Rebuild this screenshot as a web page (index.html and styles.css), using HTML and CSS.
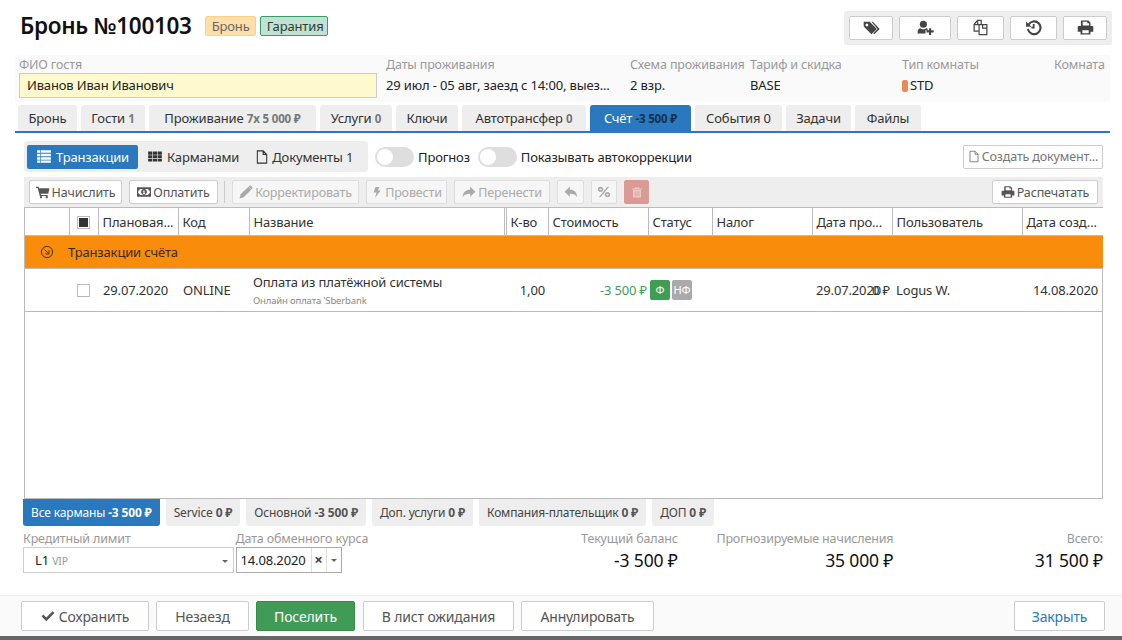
FILE: index.html
```html
<!DOCTYPE html>
<html lang="ru">
<head>
<meta charset="utf-8">
<title>Бронь №100103</title>
<link rel="stylesheet" href="styles.css">
</head>
<body>
<svg class="defs" width="0" height="0" aria-hidden="true">
  <symbol id="i-tags" viewBox="0 0 24 24"><path fill-rule="evenodd" d="M1 4h8.5l10 10-7.5 7.5L2 11.500 1 10zM5.500 6.500a2 2 0 1 0 .01 0z"/><path d="M12 4h2l9.500 10-7.500 7.500-1.500-1.500 6-6z"/></symbol>
  <symbol id="i-userplus" viewBox="0 0 24 24"><circle cx="9" cy="7.500" r="5"/><path d="M1 21v-3c0-3 1.500-5 4-5 1 1 2.500 1.600 4 1.600s3-.6 4-1.600c.8 0 1.500.2 2 .6V16h-3v4.500H2.500zM17 13h3v3h3.500v3H20v3.500h-3V19h-3.500v-3H17z"/></symbol>
  <symbol id="i-files" viewBox="0 0 24 24"><path fill="none" stroke="currentColor" stroke-width="1.700" d="M8 2h5v6H8zM8 2 3 7.500V17h6M3 8h5M11.500 8H15l6 0v14H10V8"/><path fill="none" stroke="currentColor" stroke-width="1.700" d="M15 8V13h6"/></symbol>
  <symbol id="i-history" viewBox="0 0 24 24"><path fill="none" stroke="currentColor" stroke-width="3" d="M5 8a9 9 0 1 1-1 6"/><path d="M1.500 3.500 9 11H1.500z"/><path d="M11 7h2.500v6.500H9V11h2z"/></symbol>
  <symbol id="i-print" viewBox="0 0 24 24"><path fill-rule="evenodd" d="M6 2h10l3 3v5H5.500V3zM8 4v5h9V6h-2.500V4zM1 11.500C1 10.500 2 10 3 10h18c1 0 2 .5 2 1.500V18h-4v4H5v-4H1zM7.500 16v4h9v-4z"/></symbol>
  <symbol id="i-list" viewBox="0 0 24 24"><path d="M1 3h5v4H1zM7 3h16v4H7zM1 8.500h5v4H1zM7 8.500h16v4H7zM1 14h5v4H1zM7 14h16v4H7zM1 19.500h5V23H1zM7 19.500h16V23H7z" transform="translate(0 -1)"/></symbol>
  <symbol id="i-th" viewBox="0 0 24 24"><path d="M1 4h6.500v5H1zM8.500 4h7v5h-7zM16.500 4H23v5h-6.500zM1 10h6.500v4.500H1zM8.500 10h7v4.500h-7zM16.500 10H23v4.500h-6.500zM1 15.500h6.500V20H1zM8.500 15.500h7V20h-7zM16.500 15.500H23V20h-6.500z"/></symbol>
  <symbol id="i-file" viewBox="0 0 24 24"><path fill="none" stroke="currentColor" stroke-width="1.800" d="M4 1.500h10l6 6v15H4zM14 1.500v6h6"/></symbol>
  <symbol id="i-cart" viewBox="0 0 24 24"><path d="M0 3h4.500l.7 2.500H23l-2 9.500H8l.5 2H20v2H6.500L3 5H0z"/><circle cx="8.500" cy="21" r="2"/><circle cx="18.500" cy="21" r="2"/></symbol>
  <symbol id="i-money" viewBox="0 0 24 24"><path fill-rule="evenodd" d="M0 4h24v16H0zM5 7a3 3 0 0 1-3 3v4a3 3 0 0 1 3 3h14a3 3 0 0 1 3-3v-4a3 3 0 0 1-3-3z"/><path fill-rule="evenodd" d="M12 7a5 5 0 1 0 .01 0zM11 9.500h2v4.500h1v1.300h-4V14h1v-3h-1z"/></symbol>
  <symbol id="i-pencil" viewBox="0 0 24 24"><path d="M1 23l1.800-7L16 3l5 5L8 21zM17.500 1.500c1-1 2-1 3 0l2 2c1 1 1 2 0 3l-1 1-5-5z"/></symbol>
  <symbol id="i-bolt" viewBox="0 0 24 24"><path d="M9 1h8l-3.500 7H19L8 23l3-11H5z"/></symbol>
  <symbol id="i-share" viewBox="0 0 24 24"><path d="M14 3l9 8.500-9 8.500v-5c-6 0-10 1-13 6 0-8 5-13 13-13.500z"/></symbol>
  <symbol id="i-reply" viewBox="0 0 24 24"><path d="M10 3 1 11.500l9 8.500v-5c6 0 10 1 12 6 1-8-4-13-12-13.500z"/></symbol>
  <symbol id="i-percent" viewBox="0 0 24 24"><path fill-rule="evenodd" d="M6 3a4.500 4.500 0 1 0 .01 0zM6 6a1.500 1.500 0 1 1-.01 0zM18 12a4.500 4.500 0 1 0 .01 0zM18 15a1.500 1.500 0 1 1-.01 0z"/><path d="M18 3h3L6 21H3z"/></symbol>
  <symbol id="i-trash" viewBox="0 0 24 24"><path fill-rule="evenodd" d="M8 2h8l1 2h5v2H2V4h5zM4 7h16v15H4zM7.500 9.500v10h1.500v-10zM11.200 9.500v10h1.600v-10zM15 9.500v10h1.500v-10z"/></symbol>
  <symbol id="i-check" viewBox="0 0 24 24"><path d="M9 21 1 12.500l3-3 5 5L20 4l3 3z"/></symbol>
</svg>

<div class="page">
  <header class="top">
    <h1 class="title">Бронь №100103</h1>
    <span class="badge badge-orange">Бронь</span>
    <span class="badge badge-green">Гарантия</span>
    <div class="top-tools">
      <button class="tool tool-1"><svg class="ic ic-16"><use href="#i-tags"/></svg></button>
      <button class="tool tool-2"><svg class="ic ic-16"><use href="#i-userplus"/></svg></button>
      <button class="tool tool-3"><svg class="ic ic-16"><use href="#i-files"/></svg></button>
      <button class="tool tool-4"><svg class="ic ic-16"><use href="#i-history"/></svg></button>
      <button class="tool tool-5"><svg class="ic ic-16"><use href="#i-print"/></svg></button>
    </div>
  </header>

  <section class="info">
    <div class="field"><div class="lbl">ФИО гостя</div><div class="guest">Иванов Иван Иванович</div></div>
    <div class="field"><div class="lbl">Даты проживания</div><div class="val val-clip">29 июл - 05 авг, заезд с 14:00, выез...</div></div>
    <div class="field"><div class="lbl">Схема проживания</div><div class="val">2 взр.</div></div>
    <div class="field"><div class="lbl">Тариф и скидка</div><div class="val">BASE</div></div>
    <div class="field"><div class="lbl">Тип комнаты</div><div class="val"><i class="room-dot"></i>STD</div></div>
    <div class="field"><div class="lbl">Комната</div></div>
  </section>

  <nav class="tabs">
    <a class="tab w1">Бронь</a>
    <a class="tab w2">Гости <b>1</b></a>
    <a class="tab w3">Проживание <b>7x 5 000 ₽</b></a>
    <a class="tab w4">Услуги <b>0</b></a>
    <a class="tab w5">Ключи</a>
    <a class="tab w6">Автотрансфер <b>0</b></a>
    <a class="tab w7 active">Счёт <b>-3 500 ₽</b></a>
    <a class="tab w8">События 0</a>
    <a class="tab w9">Задачи</a>
    <a class="tab w10">Файлы</a>
  </nav>

  <section class="account">
    <div class="view-row">
      <div class="views">
        <a class="view active"><svg class="ic ic-list"><use href="#i-list"/></svg>Транзакции</a>
        <a class="view"><svg class="ic ic-list"><use href="#i-th"/></svg>Карманами</a>
        <a class="view"><svg class="ic ic-14"><use href="#i-file"/></svg>Документы 1</a>
      </div>
      <span class="switch"></span><span class="switch-label">Прогноз</span>
      <span class="switch"></span><span class="switch-label">Показывать автокоррекции</span>
      <button class="btn btn-create"><svg class="ic ic-12"><use href="#i-file"/></svg>Создать документ...</button>
    </div>

    <div class="toolbar">
      <button class="btn b-charge"><svg class="ic ic-14"><use href="#i-cart"/></svg>Начислить</button>
      <button class="btn b-pay"><svg class="ic ic-14"><use href="#i-money"/></svg>Оплатить</button>
      <span class="sep"></span>
      <button class="btn off b-correct"><svg class="ic ic-14"><use href="#i-pencil"/></svg>Корректировать</button>
      <button class="btn off b-post"><svg class="ic ic-12"><use href="#i-bolt"/></svg>Провести</button>
      <button class="btn off b-move"><svg class="ic ic-14"><use href="#i-share"/></svg>Перенести</button>
      <button class="btn off b-undo"><svg class="ic ic-14"><use href="#i-reply"/></svg></button>
      <button class="btn off b-pct"><svg class="ic ic-14"><use href="#i-percent"/></svg></button>
      <button class="btn b-del"><svg class="ic ic-12"><use href="#i-trash"/></svg></button>
      <button class="btn b-print"><svg class="ic ic-14"><use href="#i-print"/></svg>Распечатать</button>
    </div>

    <div class="grid">
      <table>
        <colgroup>
          <col class="c1"><col class="c2"><col class="c3"><col class="c4"><col class="c5"><col class="c6"><col class="c7"><col class="c8"><col class="c9"><col class="c10"><col class="c11"><col class="c12">
        </colgroup>
        <thead>
          <tr>
            <th></th>
            <th class="center"><span class="cb cb-all"></span></th>
            <th>Плановая...</th>
            <th>Код</th>
            <th>Название</th>
            <th>К-во</th>
            <th>Стоимость</th>
            <th>Статус</th>
            <th>Налог</th>
            <th>Дата про...</th>
            <th>Пользователь</th>
            <th>Дата созд...</th>
          </tr>
        </thead>
        <tbody>
          <tr class="group">
            <td colspan="12"><svg class="ic-group" viewBox="0 0 14 14"><circle cx="7" cy="7" r="5.600" fill="none" stroke="currentColor"/><path d="M4.500 4.500 8.500 8.500M9 5.500V9H5.500" fill="none" stroke="currentColor"/></svg>Транзакции счёта</td>
          </tr>
          <tr class="row">
            <td></td>
            <td class="center"><span class="cb"></span></td>
            <td>29.07.2020</td>
            <td>ONLINE</td>
            <td class="name">Оплата из платёжной системы<small>Онлайн оплата 'Sberbank</small></td>
            <td class="right qty">1,00</td>
            <td class="right cost">-3 500 ₽</td>
            <td class="status"><span class="st st-f">Ф</span><span class="st st-n">НФ</span></td>
            <td></td>
            <td class="right tax">0 ₽</td>
            <td class="date-after">Logus W.</td>
            <td class="right">14.08.2020</td>
          </tr>
        </tbody>
      </table>
      <span class="paid-date">29.07.2020</span>
    </div>

    <div class="pockets">
      <a class="pocket active">Все карманы <b>-3 500 ₽</b></a>
      <a class="pocket">Service <b>0 ₽</b></a>
      <a class="pocket">Основной <b>-3 500 ₽</b></a>
      <a class="pocket">Доп. услуги <b>0 ₽</b></a>
      <a class="pocket">Компания-плательщик <b>0 ₽</b></a>
      <a class="pocket">ДОП <b>0 ₽</b></a>
    </div>

    <div class="summary">
      <div class="sum-limit">
        <div class="lbl">Кредитный лимит</div>
        <div class="select">L1 <span class="vip">VIP</span><i class="caret"></i></div>
      </div>
      <div class="sum-date">
        <div class="lbl">Дата обменного курса</div>
        <div class="datebox"><span class="d-val">14.08.2020</span><span class="d-x">×</span><span class="d-c"><i class="caret"></i></span></div>
      </div>
      <div class="sum-val s1"><div class="lbl">Текущий баланс</div><div class="big">-3 500 ₽</div></div>
      <div class="sum-val s2"><div class="lbl">Прогнозируемые начисления</div><div class="big">35 000 ₽</div></div>
      <div class="sum-val s3"><div class="lbl">Всего:</div><div class="big">31 500 ₽</div></div>
    </div>
  </section>

  <footer class="foot">
    <button class="fbtn f1"><svg class="ic ic-14"><use href="#i-check"/></svg>Сохранить</button>
    <button class="fbtn f2">Незаезд</button>
    <button class="fbtn f3">Поселить</button>
    <button class="fbtn f4">В лист ожидания</button>
    <button class="fbtn f5">Аннулировать</button>
    <button class="fbtn f6">Закрыть</button>
  </footer>
  <div class="bottom-bar"></div>
</div>
</body>
</html>
```

FILE: styles.css
```css
* { box-sizing: border-box; }
html, body { margin: 0; padding: 0; }
body {
  width: 1122px;
  height: 640px;
  overflow: hidden;
  background: #fff;
  color: #333;
  font-family: "Noto Sans", "Liberation Sans", sans-serif;
  font-size: 13px;
  letter-spacing: -0.15px;
}
.defs { position: absolute; }
.page { display: flex; flex-direction: column; height: 640px; }
button { font: inherit; letter-spacing: inherit; margin: 0; cursor: pointer; }
.ic { fill: currentColor; flex: none; }
.ic-16 { width: 17px; height: 17px; }
.ic-14 { width: 14px; height: 14px; }
.ic-12 { width: 12px; height: 13px; }
.ic-list { width: 18px; height: 15px; }

/* header */
.top { display: flex; align-items: center; height: 55px; padding: 0 10px 4px 20px; }
.title { margin: 0; font-size: 22.500px; font-weight: 600; color: #111; letter-spacing: -0.3px; line-height: 28px; }
.badge { height: 20px; line-height: 18px; padding: 0 6px; border: 1px solid; border-radius: 2px; font-size: 13px; }
.badge-orange { margin-left: 13px; width: 51px; background: #ffdfa9; border-color: #fbd08a; color: #666; }
.badge-green { margin-left: 4px; width: 68px; background: #c0e2d2; border-color: #3d9a6a; color: #2f3d36; }
.top-tools { margin-left: auto; display: flex; gap: 6px; height: 34px; padding: 5px; background: #eee; border-radius: 2px; margin-top: 4px; }
.tool { height: 24px; display: flex; align-items: center; justify-content: center; padding: 0; background: #fff; border: 1px solid #ccc; border-radius: 2px; color: #444; }
.tool-1 { width: 44px; }
.tool-2 { width: 52px; }
.tool-3 { width: 47px; }
.tool-4 { width: 47px; }
.tool-5 { width: 44px; }

/* info strip */
.info { display: grid; grid-template-columns: 367px 244px 120px 152px 152px 1fr; margin: 0 12px 0 15px; height: 47px; padding: 2px 0 0 4px; background: #fafafa; }
.lbl { color: #999; font-size: 12.500px; line-height: 16px; white-space: nowrap; }
.guest { width: 358px; height: 25px; line-height: 23px; padding: 0 7px; background: #fffacd; border: 1px solid #ccc; color: #222; }
.val { height: 25px; line-height: 25px; color: #222; white-space: nowrap; }
.val-clip { width: 232px; overflow: hidden; }
.room-dot { display: inline-block; width: 6px; height: 12px; margin-right: 2px; border-radius: 2px; background: #e98a5a; vertical-align: -2px; }

/* tabs */
.tabs { display: flex; gap: 4px; height: 28px; margin: 3px 12px 0 15px; padding-left: 3px; border-bottom: 2px solid #2b78bd; }
.tab { display: block; height: 26px; line-height: 27px; text-align: center; background: #eee; border-radius: 3px 3px 0 0; color: #333; white-space: nowrap; }
.tab b { font-size: 11.500px; font-weight: 700; color: #777; }
.tab.active { background: #2a78bd; color: #fff; }
.tab.active b { color: #13314e; }
.w1 { width: 59px; } .w2 { width: 64px; } .w3 { width: 167px; } .w4 { width: 72px; } .w5 { width: 62px; }
.w6 { width: 124px; } .w7 { width: 101px; } .w8 { width: 87px; } .w9 { width: 65px; } .w10 { width: 66px; }

/* account */
.account { flex: 1; min-height: 0; padding: 8px 19px 0 24px; }
.view-row { display: flex; align-items: center; height: 31px; }
.views { display: flex; align-items: center; height: 31px; width: 344px; padding: 0 3px; background: #eee; border-radius: 3px; }
.view { display: flex; align-items: center; gap: 3px; height: 24px; padding: 0 8px; border-radius: 2px; color: #333; white-space: nowrap; }
.view.active { background: #2a78bd; color: #fff; width: 111px; }
.switch { position: relative; display: block; width: 39px; height: 20px; margin: 0 4px 0 7px; border-radius: 10px; background: #dedede; }
.switch::after { content: ""; position: absolute; left: 2px; top: 2px; width: 16px; height: 16px; border-radius: 50%; background: #fff; }
.switch-label { color: #222; white-space: nowrap; }
.switch-label + .switch { margin-left: 8px; }
.btn { display: inline-flex; align-items: center; justify-content: center; gap: 2px; height: 24px; padding: 0; background: #fff; border: 1px solid #ccc; border-radius: 2px; color: #555; white-space: nowrap; font-size: 12.500px; }
.btn-create { margin-left: auto; width: 140px; height: 24px; color: #777; }
.toolbar { display: flex; align-items: center; gap: 7px; height: 30px; margin-top: 5px; padding: 0 5px; background: #eee; }
.btn.off { background: #f6f6f6; border-color: #ddd; color: #aaa; }
.b-charge { width: 93px; } .b-pay { width: 89px; }
.sep { width: 1px; height: 22px; background: #ccc; margin: 0 0 0 -1px; }
.b-correct { width: 127px; } .b-post { width: 81px; } .b-move { width: 96px; } .b-undo { width: 27px; } .b-pct { width: 26px; }
.b-del { width: 25px; background: #db9a94; border-color: #db9a94; color: #eccac6; }
.b-print { width: 106px; margin-left: auto; }

/* grid */
.grid { position: relative; height: 292px; border: 1px solid #bbb; border-top: 0; }
table { width: 100%; border-collapse: collapse; table-layout: fixed; }
.c1 { width: 44px; } .c2 { width: 29px; } .c3 { width: 80px; } .c4 { width: 71px; } .c5 { width: 257px; } .c6 { width: 42px; }
.c7 { width: 100px; } .c8 { width: 64px; } .c9 { width: 100px; } .c10 { width: 80px; } .c11 { width: 130px; } .c12 { width: 81px; }
th { height: 28px; padding: 0 4px; border: 1px solid #bbb; border-top: 1px solid #bbb; border-left: 0; font-weight: 400; text-align: left; color: #333; background: #fff; white-space: nowrap; overflow: hidden; }
th:last-child { border-right: 0; }
th:nth-child(5) { box-shadow: inset -1px 0 0 #fff, inset -2px 0 0 #bbb; }
.center { text-align: center; }
.right { text-align: right; }
.cb { display: inline-block; width: 13px; height: 13px; border: 1px solid #bbb; background: #fff; vertical-align: -2px; }
.cb-all { background: #333; box-shadow: inset 0 0 0 1px #fff; }
.group td { height: 33px; padding: 0 0 0 15px; background: #f98c0a; border-bottom: 1px solid #bbb; color: #3a2a10; }
.ic-group { width: 14px; height: 14px; margin-right: 14px; vertical-align: -2px; color: #4a3210; }
.row td { height: 43px; padding: 0 5px; border-bottom: 1px solid #bbb; white-space: nowrap; color: #333; }
.name { line-height: 18px; vertical-align: top; padding-top: 4px !important; padding-left: 4px !important; }
.name small { display: block; margin-top: 4px; font-size: 9.500px; line-height: 12px; color: #888; }
.row .qty { padding-right: 3px; }
.row .cost { padding-right: 1px; color: #3f9d54; }
.status { padding: 0 0 0 2px !important; }
.st { display: inline-block; width: 20px; height: 20px; line-height: 20px; margin-right: 2px; border-radius: 2px; text-align: center; color: #fff; font-size: 11px; vertical-align: middle; }
.st-f { background: #3f9d54; }
.st-n { background: #aaa; }
.tax { padding-right: 2px !important; }
.date-after { padding-left: 4px !important; }
.paid-date { position: absolute; left: 791px; top: 74px; color: #333; }

/* pockets */
.pockets { display: flex; gap: 6px; height: 27px; margin-left: -1px; margin-top: 0; }
.pocket { display: block; height: 27px; line-height: 27px; padding: 0 8px; background: #eee; border-radius: 0 0 3px 3px; color: #444; font-size: 12px; white-space: nowrap; }
.pocket b { font-weight: 700; color: #555; }
.pocket.active { background: #2a78bd; color: #fff; }
.pocket.active b { color: #fff; }

/* summary */
.summary { display: flex; margin-top: 5px; margin-left: -1px; }
.sum-limit { width: 217px; }
.sum-date { width: 200px; }
.select { position: relative; width: 211px; height: 26px; line-height: 24px; padding: 0 11px; background: #fff; border: 1px solid #ccc; color: #222; }
.vip { font-size: 10.500px; color: #999; }
.caret { display: inline-block; width: 0; height: 0; border-left: 3px solid transparent; border-right: 3px solid transparent; border-top: 3px solid #666; }
.select .caret { position: absolute; right: 5px; top: 12px; }
.datebox { display: flex; width: 106px; height: 26px; background: #fff; border: 1px solid #aaa; }
.d-val { width: 74px; line-height: 24px; padding-left: 4px; color: #222; white-space: nowrap; }
.d-x { width: 15px; line-height: 22px; border-left: 1px solid #ddd; text-align: center; color: #444; font-size: 15px; font-weight: 700; }
.d-c { flex: 1; display: flex; align-items: center; justify-content: center; border-left: 1px solid #ddd; }
.sum-val { text-align: right; }
.s1 { width: 128px; margin-left: 123px; padding-right: 2px; }
.s2 { width: 218px; }
.s3 { width: 214px; }
.big { color: #111; font-size: 17.500px; line-height: 26px; }

/* footer */
.foot { position: relative; display: flex; align-items: center; height: 41px; padding: 0 17px 0 21px; gap: 7px; background: #fafafa; border-top: 1px solid #eee; }
.fbtn { display: flex; align-items: center; justify-content: center; gap: 4px; height: 30px; padding: 0; background: #fff; border: 1px solid #ccc; border-radius: 2px; color: #555; font-size: 14px; }
.f1 { width: 128px; } .f2 { width: 93px; }
.f3 { width: 99px; background: #3f9b55; border-color: #388a4b; color: #fff; }
.f4 { width: 151px; margin-left: 1px; } .f5 { width: 133px; }
.f6 { width: 91px; margin-left: auto; color: #2a78bd; }
.bottom-bar { height: 4px; background: #666; }
```
